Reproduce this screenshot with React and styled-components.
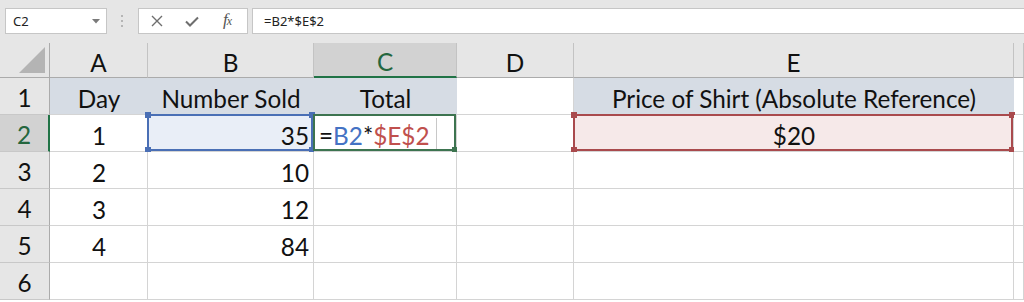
import React from "react";
import styled, { createGlobalStyle } from "styled-components";

const GlobalStyle = createGlobalStyle`
  html, body {
    margin: 0;
    padding: 0;
    background: #ffffff;
  }
  * {
    box-sizing: border-box;
  }
`;

const Window = styled.div`
  width: 1024px;
  height: 302px;
  overflow: hidden;
  background: #ffffff;
  font-family: Lato, "Liberation Sans", sans-serif;
`;

const FormulaBar = styled.div`
  height: 43px;
  background: #e6e6e6;
  display: flex;
  align-items: flex-start;
  padding: 8px 0 0 5px;
  font-family: "Noto Sans", "Open Sans", sans-serif;
  font-size: 13px;
  color: #222;
`;

const NameBox = styled.div`
  width: 102px;
  height: 26px;
  background: #fff;
  border: 1px solid #c6c6c6;
  display: flex;
  align-items: center;
  justify-content: space-between;
  padding: 0 6px 0 7px;
`;

const Grip = styled.div`
  width: 31px;
  height: 26px;
  display: flex;
  align-items: center;
  justify-content: center;
`;

const ButtonGroup = styled.div`
  width: 110px;
  height: 26px;
  background: #fff;
  border: 1px solid #c6c6c6;
  display: flex;
  align-items: center;
  padding-left: 11px;
  gap: 21px;
`;

const IconButton = styled.span`
  display: flex;
  align-items: center;
  justify-content: center;
  width: 14px;
  color: #6b6b6b;
`;

const Fx = styled.span`
  font-family: "Liberation Serif", serif;
  font-style: italic;
  font-size: 17px;
  color: #555;
  letter-spacing: -1px;
  margin-left: 3px;
  margin-top: -2px;

  small {
    font-size: 12px;
  }
`;

const FormulaInput = styled.div`
  flex: 1;
  height: 26px;
  margin-left: 4px;
  background: #fff;
  border: 1px solid #c6c6c6;
  border-right: none;
  display: flex;
  align-items: center;
  padding-left: 11px;
`;

const Sheet = styled.div`
  display: grid;
  grid-template-columns: 50px 98px 166px 143px 117px 440px 1fr;
  grid-template-rows: 35px repeat(6, 37px);
  font-size: 24.3px;
  color: #111;
`;

const Corner = styled.div`
  background: #e6e6e6;
  border-right: 1px solid #ababab;
  border-bottom: 1px solid #ababab;
  display: flex;
  align-items: flex-end;
  justify-content: flex-end;
  padding: 0 4px 4px 0;
`;

const ColHead = styled.div`
  background: ${(p) => (p.$active ? "#d2d2d2" : "#e6e6e6")};
  color: ${(p) => (p.$active ? "#24663e" : "#111")};
  border-right: 1px solid #c3c3c3;
  border-bottom: ${(p) => (p.$active ? "2px solid #217346" : "1px solid #ababab")};
  display: flex;
  align-items: center;
  justify-content: center;
  padding-top: 4px;
`;

const RowHead = styled.div`
  background: ${(p) => (p.$active ? "#d2d2d2" : "#e6e6e6")};
  color: ${(p) => (p.$active ? "#24663e" : "#111")};
  border-right: ${(p) => (p.$active ? "2px solid #217346" : "1px solid #ababab")};
  border-bottom: 1px solid #c8c8c8;
  display: flex;
  align-items: center;
  justify-content: center;
  padding-top: 3px;
`;

const Cell = styled.div`
  position: relative;
  background: ${(p) => p.$fill || "#fff"};
  border-right: 1px solid ${(p) => (p.$fill === "#d6dce4" ? "#d6dce4" : "#d4d4d4")};
  border-bottom: 1px solid #d4d4d4;
  display: flex;
  align-items: center;
  justify-content: ${(p) =>
    p.$align === "right" ? "flex-end" : p.$align === "left" ? "flex-start" : "center"};
  padding: 4px 4px 0 5px;
  white-space: nowrap;
`;

const Selection = styled.div`
  position: absolute;
  top: -1px;
  left: -1px;
  right: 0;
  bottom: 0;
  border: 2px solid ${(p) => p.$color};
  pointer-events: none;
`;

const Handle = styled.span`
  position: absolute;
  width: 6px;
  height: 6px;
  background: ${(p) => p.$color};
  ${(p) => (p.$v === "top" ? "top: -4px;" : "bottom: -4px;")}
  ${(p) => (p.$h === "left" ? "left: -4px;" : "right: -4px;")}
`;

const Ref = styled.span`
  color: ${(p) => p.$color};
`;

const Caret = styled.span`
  display: inline-block;
  width: 1px;
  height: 31px;
  background: #c8c8c8;
  margin-left: 6px;
  margin-top: -3px;
`;

const BLUE = "#4a6fb5";
const GREEN = "#3d7450";
const RED = "#a94a4d";

const corners = [
  ["top", "left"],
  ["top", "right"],
  ["bottom", "left"],
  ["bottom", "right"],
];

const SelectBox = ({ color, handles }) => (
  <Selection $color={color}>
    {handles.map(([v, h]) => (
      <Handle key={v + h} $v={v} $h={h} $color={color} />
    ))}
  </Selection>
);

const HEADER_FILL = "#d6dce4";
const data = [
  ["1", "10"],
  ["2", "12"],
  ["3", "84"],
];

export default function App() {
  return (
    <Window>
      <GlobalStyle />
      <FormulaBar>
        <NameBox>
          <span>C2</span>
          <svg width="8" height="5" viewBox="0 0 8 5">
            <path d="M0 0 L8 0 L4 4.5 Z" fill="#7a7a7a" />
          </svg>
        </NameBox>
        <Grip>
          <svg width="3" height="13" viewBox="0 0 3 13">
            <rect x="0" y="0" width="2" height="2" fill="#b5b5b5" />
            <rect x="0" y="5" width="2" height="2" fill="#b5b5b5" />
            <rect x="0" y="10" width="2" height="2" fill="#b5b5b5" />
          </svg>
        </Grip>
        <ButtonGroup>
          <IconButton>
            <svg width="12" height="12" viewBox="0 0 12 12">
              <path d="M1 1 L11 11 M11 1 L1 11" stroke="#6e6e6e" strokeWidth="1.4" />
            </svg>
          </IconButton>
          <IconButton>
            <svg width="14" height="11" viewBox="0 0 14 11">
              <path d="M1 5.5 L5 9.5 L13 1.5" stroke="#6e6e6e" strokeWidth="2" fill="none" />
            </svg>
          </IconButton>
          <Fx>
            f<small>x</small>
          </Fx>
        </ButtonGroup>
        <FormulaInput>=B2*$E$2</FormulaInput>
      </FormulaBar>

      <Sheet>
        <Corner>
          <svg width="26" height="26" viewBox="0 0 26 26">
            <path d="M26 0 L26 26 L0 26 Z" fill="#b4b4b4" />
          </svg>
        </Corner>
        <ColHead>A</ColHead>
        <ColHead>B</ColHead>
        <ColHead $active>C</ColHead>
        <ColHead>D</ColHead>
        <ColHead>E</ColHead>
        <ColHead />

        <RowHead>1</RowHead>
        <Cell $fill={HEADER_FILL}>Day</Cell>
        <Cell $fill={HEADER_FILL}>Number Sold</Cell>
        <Cell $fill={HEADER_FILL}>Total</Cell>
        <Cell />
        <Cell $fill={HEADER_FILL}>Price of Shirt (Absolute Reference)</Cell>
        <Cell />

        <RowHead $active>2</RowHead>
        <Cell>1</Cell>
        <Cell $fill="#e9eef7" $align="right">
          35
          <SelectBox color={BLUE} handles={corners} />
        </Cell>
        <Cell $align="left">
          =<Ref $color="#4472c4">B2</Ref>*<Ref $color="#c0504d">$E$2</Ref>
          <Caret />
          <SelectBox color={GREEN} handles={[["bottom", "right"]]} />
        </Cell>
        <Cell />
        <Cell $fill="#f6e9e9">
          $20
          <SelectBox color={RED} handles={corners} />
        </Cell>
        <Cell />

        {data.map(([day, sold], i) => (
          <React.Fragment key={day}>
            <RowHead>{i + 3}</RowHead>
            <Cell>{i + 2}</Cell>
            <Cell $align="right">{sold}</Cell>
            <Cell />
            <Cell />
            <Cell />
            <Cell />
          </React.Fragment>
        ))}

        <RowHead>6</RowHead>
        <Cell />
        <Cell />
        <Cell />
        <Cell />
        <Cell />
        <Cell />
      </Sheet>
    </Window>
  );
}
